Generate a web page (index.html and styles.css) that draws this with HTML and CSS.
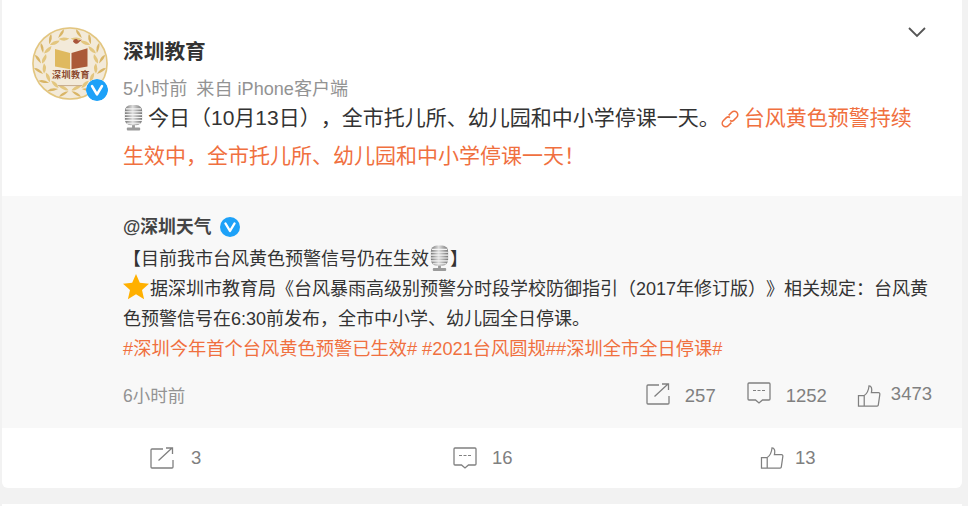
FILE: index.html
```html
<!DOCTYPE html>
<html lang="zh-CN">
<head>
  <meta charset="UTF-8">
  <title>深圳教育</title>
  <link rel="stylesheet" href="styles.css">
</head>
<body>
  <svg class="defs" width="0" height="0">
    <defs>
      <linearGradient id="metal" x1="0" x2="1" y1="0" y2="0">
        <stop offset="0" stop-color="#777"/>
        <stop offset=".45" stop-color="#ddd"/>
        <stop offset="1" stop-color="#777"/>
      </linearGradient>
    </defs>
    <symbol id="mic" viewBox="0 0 22 28">
      <rect x="2" y="1" width="18" height="21" rx="6" fill="url(#metal)"/>
      <path d="M3 5h16M2 8h18M2 11h18M2 14h18M2 17h18M4 20h14" stroke="#f4f4f4" stroke-width="1.200"/>
      <path d="M11 22v3" stroke="#999" stroke-width="3"/>
      <rect x="4" y="24.500" width="14" height="3" rx="1" fill="#9a9a9a"/>
    </symbol>
    <symbol id="vip" viewBox="0 0 20 20">
      <circle cx="10" cy="10" r="10" fill="#1da1f8"/>
      <path d="M5.500 6.500 10 14l4.500-7.500" fill="none" stroke="#fff" stroke-width="2.400" stroke-linecap="round" stroke-linejoin="round"/>
    </symbol>
    <symbol id="share" viewBox="0 0 24 22">
      <path d="M13 2H2a1 1 0 0 0-1 1v17a1 1 0 0 0 1 1h20a1 1 0 0 0 1-1v-7" fill="none" stroke="currentColor" stroke-width="1.300"/>
      <path d="M8.500 13.500 22 1M16 1h6.500V7" fill="none" stroke="currentColor" stroke-width="1.300"/>
    </symbol>
    <symbol id="comment" viewBox="0 0 24 22">
      <path d="M2 1h20a1 1 0 0 1 1 1v15a1 1 0 0 1-1 1h-6.500L12 21l-3.500-3H2a1 1 0 0 1-1-1V2a1 1 0 0 1 1-1z" fill="none" stroke="currentColor" stroke-width="1.300"/>
      <path d="M6 8.500h3M10.500 8.500h3M15 8.500h3" stroke="currentColor" stroke-width="1.200"/>
    </symbol>
    <symbol id="like" viewBox="0 0 24 23">
      <path d="M1 11h6v11H1zM7 11c3-2 4.500-5 5-10 2.500 0 3.500 2.500 2.500 7h7.500c1 0 1.500 1 1.300 2l-1.600 11c-.100.700-.600 1-1.200 1H4" fill="none" stroke="currentColor" stroke-width="1.300"/>
    </symbol>
    <symbol id="leaf" viewBox="0 0 76 76">
      <path d="M38 9Q33 3 29 3Q31 8 38 9z" fill="#d9b566"/>
      <path d="M38 10Q33 9 28 14Q34 16 38 10z" fill="#e3c67f"/>
    </symbol>
    <symbol id="wreath" viewBox="0 0 76 76">
      <use href="#leaf" transform="rotate(24 38 38)"/>
      <use href="#leaf" transform="rotate(46 38 38)"/>
      <use href="#leaf" transform="rotate(68 38 38)"/>
      <use href="#leaf" transform="rotate(90 38 38)"/>
      <use href="#leaf" transform="rotate(112 38 38)"/>
      <use href="#leaf" transform="rotate(134 38 38)"/>
      <use href="#leaf" transform="rotate(156 38 38)"/>
      <use href="#leaf" transform="rotate(177 38 38)"/>
    </symbol>
  </svg>

  <div class="card">
    <div class="head">
      <div class="avatar">
        <svg class="avatar-art" viewBox="0 0 76 76" preserveAspectRatio="none">
          <circle cx="38" cy="38" r="38" fill="#f3ead9"/>
          <circle cx="38" cy="38" r="37" fill="none" stroke="#e3c67f" stroke-width="1.500"/>
          <use href="#wreath"/>
          <use href="#wreath" transform="translate(76 0) scale(-1 1)"/>
          <path d="M23 23l15 4v17l-15-3z" fill="#dfb95f"/>
          <path d="M39.500 27l16-5v19l-16 3z" fill="#ab5a38"/>
          <path d="M41 15c1-3 4-3 5-1l4-1-3 3c-1 2-4 2-6-1zM39 11l3 3" fill="#a9553a"/>
          <path d="M26 61h24" stroke="#b89878" stroke-width=".8"/>
        </svg>
        <span class="avatar-text">深圳教育</span>
        <svg class="avatar-badge"><use href="#vip"/></svg>
      </div>
      <div class="who">
        <div class="name">深圳教育</div>
        <div class="meta"><span>5小时前</span><span>来自 iPhone客户端</span></div>
      </div>
      <svg class="more" viewBox="0 0 20 12"><path d="M2 2l8 8 8-8" fill="none" stroke="#555" stroke-width="1.800"/></svg>
    </div>

    <div class="text">
      <svg class="emoji"><use href="#mic"/></svg>今日（10月13日），全市托儿所、幼儿园和中小学停课一天。<svg class="chain" viewBox="0 0 20 20"><path d="M8.500 6 12 2.500a3 3 0 0 1 5.500 5.500L14 11.500a3 3 0 0 1-4 0M11.500 14 8 17.500a3 3 0 0 1-5.500-5.500L6 8.500a3 3 0 0 1 4 0" fill="none" stroke="#f0703f" stroke-width="1.700"/></svg><a class="link">台风黄色预警持续</a><a class="link">生效中，全市托儿所、幼儿园和中小学停课一天！</a>
    </div>

    <div class="repost">
      <div class="repost-name">@深圳天气<svg class="repost-vip"><use href="#vip"/></svg></div>
      <div class="repost-text">
        <p>【目前我市台风黄色预警信号仍在生效<svg class="emoji-sm"><use href="#mic"/></svg>】</p>
        <p><svg class="star" viewBox="0 0 26 26"><path d="M13 0l3.800 8.800 9.200.9-7 6.200 2.100 9.300L13 20.300l-8.100 4.900L7 15.900 0 9.700l9.200-.9z" fill="#ffb000"/></svg>据深圳市教育局《台风暴雨高级别预警分时段学校防御指引（2017年修订版）》相关规定：台风黄色预警信号在6:30前发布，全市中小学、幼儿园全日停课。</p>
        <p class="tags">#深圳今年首个台风黄色预警已生效# #2021台风圆规##深圳全市全日停课#</p>
      </div>
      <div class="repost-foot">
        <span class="time">6小时前</span>
        <div class="counts">
          <span class="count count-share"><svg class="ico"><use href="#share"/></svg><span class="num-low">257</span></span>
          <span class="count"><svg class="ico ico-up"><use href="#comment"/></svg><span class="num-low">1252</span></span>
          <span class="count count-like"><svg class="ico ico-down"><use href="#like"/></svg><span>3473</span></span>
        </div>
      </div>
    </div>

    <div class="actions">
      <span class="action action-share"><svg class="ico"><use href="#share"/></svg>3</span>
      <span class="action"><svg class="ico"><use href="#comment"/></svg>16</span>
      <span class="action action-like"><svg class="ico"><use href="#like"/></svg>13</span>
    </div>
  </div>
  <div class="next-card"></div>
</body>
</html>
```

FILE: styles.css
```css
body {
  margin: 0;
  height: 506px;
  overflow: hidden;
  padding-left: 2px;
  padding-right: 6px;
  background-color: #f2f2f2;
  font-family: "Liberation Sans", "Noto Sans CJK SC", sans-serif;
  color: #333;
  text-spacing-trim: space-all;
}

.defs {
  display: block;
  height: 0;
}

.card {
  height: 488px;
  background-color: #fff;
  border-radius: 0 0 6px 6px;
}

.head {
  display: flex;
  height: 105px;
  padding: 27px 0 0 30px;
  box-sizing: border-box;
  position: relative;
}

.avatar {
  position: relative;
  width: 76px;
  height: 73px;
  margin-right: 15px;
}

.avatar-art {
  display: block;
  width: 76px;
  height: 73px;
}

.avatar-text {
  position: absolute;
  left: 20px;
  top: 43px;
  width: 38px;
  font-family: "Liberation Serif", "Noto Sans CJK SC", serif;
  font-size: 9px;
  line-height: 11px;
  font-weight: bold;
  letter-spacing: .5px;
  color: #8c4a30;
  white-space: nowrap;
}

.avatar-badge {
  position: absolute;
  left: 54px;
  top: 52px;
  width: 22px;
  height: 22px;
  border-radius: 50%;
  background-color: #fff;
}

.name {
  font-size: 20.700px;
  font-weight: bold;
  line-height: 30px;
  margin-top: 10px;
  color: #333;
}

.meta {
  display: flex;
  gap: 9px;
  margin-top: 10px;
  font-size: 18.100px;
  line-height: 24px;
  color: #939393;
}

.more {
  position: absolute;
  right: 35px;
  top: 26px;
  width: 20px;
  height: 12px;
}

.text {
  margin: -6px 45px 0 121px;
  height: 91px;
  padding-bottom: 6px;
  font-size: 21px;
  line-height: 38px;
}

.emoji {
  width: 21px;
  height: 27px;
  vertical-align: -6px;
  margin-right: 4px;
}

.link {
  color: #f0703f;
}

.chain {
  width: 18px;
  height: 18px;
  vertical-align: -3px;
  margin-right: 5px;
  margin-left: 1px;
}

.repost {
  height: 232px;
  box-sizing: border-box;
  padding: 16px 30px 0 121px;
  background-color: #f8f8f8;
}

.repost-name {
  display: flex;
  align-items: center;
  gap: 9px;
  font-size: 17.800px;
  font-weight: bold;
  line-height: 30px;
  color: #444;
}

.repost-text {
  margin-top: 2px;
  font-size: 18px;
  line-height: 30px;
  color: #333;
}

.repost-vip {
  width: 20px;
  height: 20px;
}

.repost-text p {
  margin: 0;
  height: 30px;
}

.repost-text p:nth-child(2) {
  height: 60px;
}

.emoji-sm {
  width: 21px;
  height: 28px;
  vertical-align: -7px;
}

.star {
  width: 26px;
  height: 26px;
  vertical-align: -5px;
  margin-right: 1px;
}

.repost-text .tags {
  font-size: 18.250px;
  color: #f0703f;
}

.repost-foot {
  display: flex;
  justify-content: space-between;
  align-items: center;
  margin-top: 15px;
  height: 30px;
  font-size: 18.500px;
  color: #808080;
}

.time {
  font-size: 17.500px;
  color: #939393;
}

.counts {
  display: flex;
  gap: 30px;
}

.count {
  display: flex;
  align-items: center;
  gap: 15px;
}

.count-share {
  margin-right: 1px;
  margin-left: -1px;
}

.count-like {
  gap: 10px;
}

.num-low {
  margin-top: 3px;
}

.ico {
  width: 24px;
  height: 22px;
  color: #808080;
}

.ico-up {
  margin-top: -3px;
}

.ico-down {
  margin-top: 3px;
}

.actions {
  display: grid;
  grid-template-columns: 303px 307px auto;
  height: 60px;
  padding-left: 148px;
  align-items: center;
  font-size: 18.500px;
  color: #808080;
}

.action {
  display: flex;
  align-items: center;
  gap: 15px;
}

.action-share {
  gap: 17px;
}

.action-like {
  gap: 11px;
}

.next-card {
  height: 2px;
  margin-top: 16px;
  background-color: #fff;
}
```
